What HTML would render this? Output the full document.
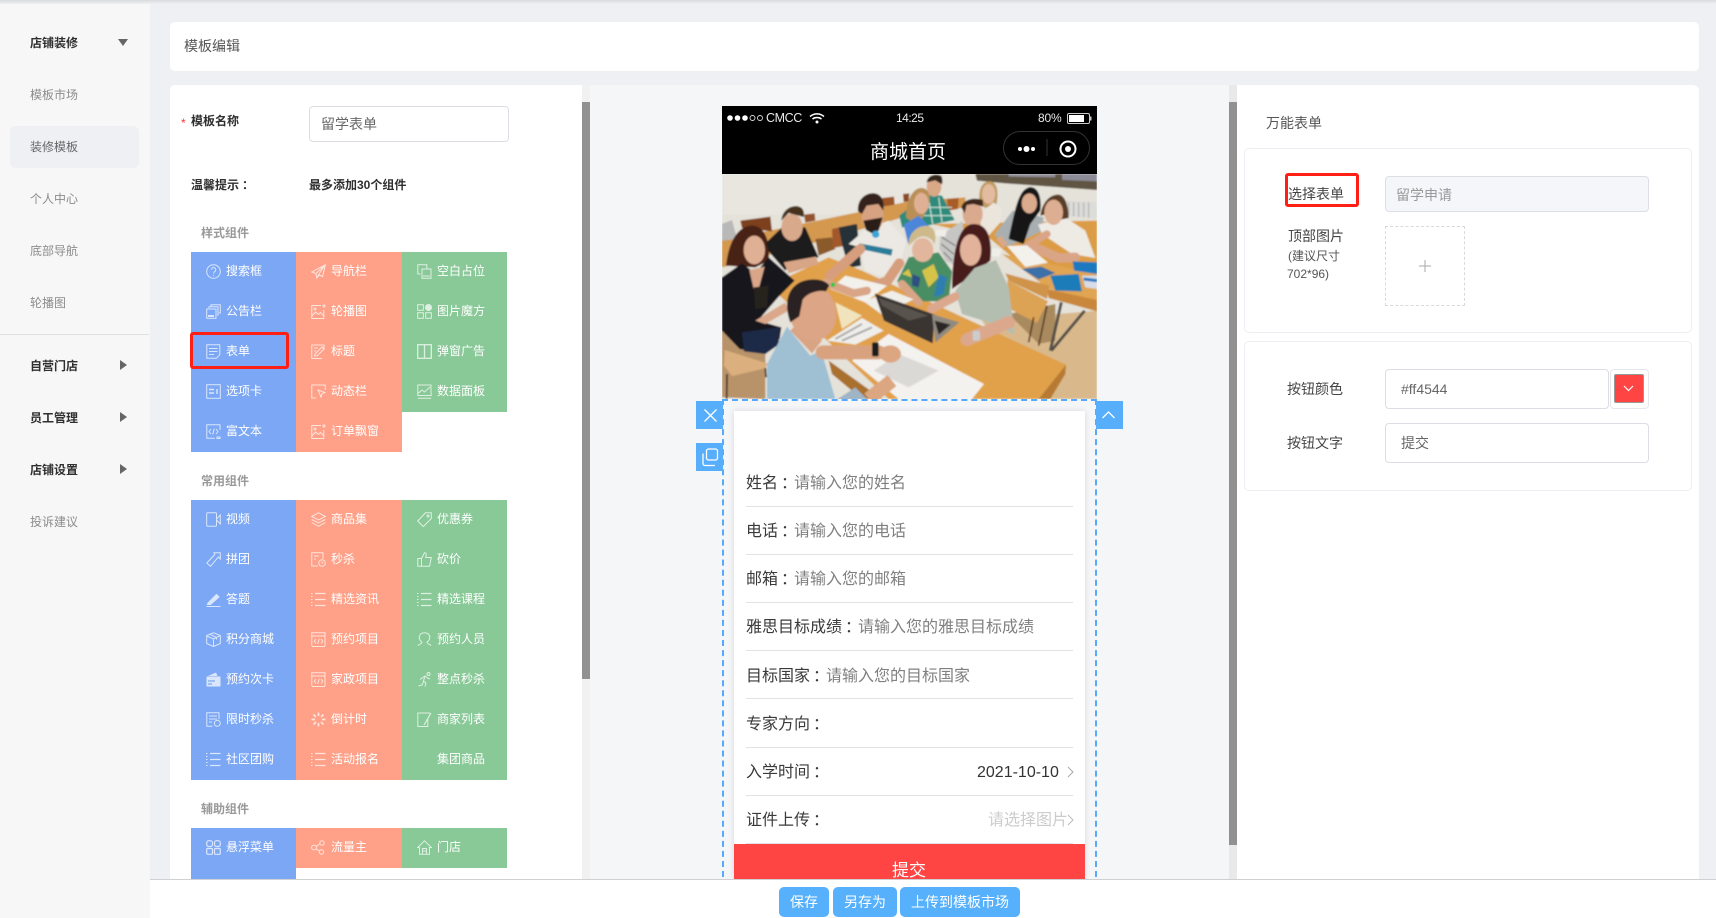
<!DOCTYPE html>
<html lang="zh-CN"><head><meta charset="utf-8"><title>模板编辑</title>
<style>
*{box-sizing:border-box}
html,body{margin:0;padding:0;width:1716px;height:918px;overflow:hidden;background:#eef0f4;font-family:"Liberation Sans","Noto Sans CJK SC",sans-serif;font-size:12px;color:#333}
.a{position:absolute}
.t{position:absolute;white-space:nowrap;line-height:20px;height:20px}
.k{font-family:"Noto Sans CJK TC",sans-serif;line-height:0;position:relative;left:3px}
#side{left:0;top:0;width:150px;height:918px;background:#f7f7f8}
#topsh{left:0;top:0;width:1716px;height:4px;background:linear-gradient(#d9dade,#eef0f4);z-index:5}
.s{left:30px;color:#8c8c8c}
.b{color:#2f2f2f;font-weight:700}
.col{position:absolute;width:105px}
.c{position:relative;height:40px;color:#fff;line-height:38px;padding-left:35px;white-space:nowrap}
.c svg{position:absolute;left:15px;top:12px;width:15px;height:15px;fill:none;stroke:#fff;stroke-width:1;opacity:.72}
.bl{background:#7ca7f4}.or{background:#ffa088}.gr{background:#89c997}
.sec{left:201px;color:#999;font-weight:700}
.ln{position:absolute;left:746px;width:327px;height:1px;background:#e2e2e2}
.f{position:absolute;left:746px;font-size:16px;line-height:22px;height:22px;color:#3a3a3a;white-space:nowrap}
.f i{font-style:normal;color:#808080}
.inp{position:absolute;background:#fff;border:1px solid #dcdee6;border-radius:4px;color:#666;font-size:14px;white-space:nowrap}
.btn{position:absolute;top:887px;height:30px;background:#57b0fb;color:#fff;border-radius:5px;text-align:center;font-size:14px;line-height:30px}
.card{position:absolute;left:1244px;width:448px;background:#fff;border:1px solid #eceef3;border-radius:5px}
.lb{left:1288px;font-size:14px;color:#444}
.red{position:absolute;border:3px solid #ff1f14;border-radius:3px}
</style></head><body>
<svg width="0" height="0" style="position:absolute"><defs>
<symbol id="q" viewBox="0 0 15 15"><circle cx="7.5" cy="7.5" r="6.8"/><path d="M5.4 5.8a2.2 2.2 0 1 1 3.4 1.8c-.8.5-1.2 1-1.2 1.9M7.5 10.8v1"/></symbol>
<symbol id="not" viewBox="0 0 15 15"><rect x=".7" y="5" width="9.3" height="9.3"/><path d="M3 4V2.8h9V11h-1M5 2.3V.8h9.3V9h-1.5"/><path d="M2 12h6" stroke-width="2"/></symbol>
<symbol id="frm" viewBox="0 0 15 15"><path d="M.8 14.3V.7h13v10l-3.500 3.600zM3 4.500h8.500M3 7.500h8.500M3 10.500h5"/></symbol>
<symbol id="tab" viewBox="0 0 15 15"><rect x=".7" y=".7" width="13.600" height="13.600"/><path d="M3 5.500h5M3 9h5M11 5v5" stroke-width="1.400"/></symbol>
<symbol id="rich" viewBox="0 0 15 15"><path d="M14 6V.8H.8v13.400h8"/><path d="M5 5 3 7.500 5 10M10 5l2 2.500-2 2.500M8.300 4.500 6.700 10.500M11 13h3v1.500h-3z"/></symbol>
<symbol id="nav" viewBox="0 0 15 15"><path d="M14.300.8.800 8l4 1.500 1 4.500 2.300-3 3.500 1.500zM14 1 5 9.500M14 1 6 13"/></symbol>
<symbol id="pic" viewBox="0 0 15 15"><path d="M10 1.500H.8v13h12V6"/><path d="M1 12l3.500-4 3 2.500 2-2 3.300 3.500"/><circle cx="4" cy="5" r="1"/><path d="M13 0v4M11 2h4"/></symbol>
<symbol id="ttl" viewBox="0 0 15 15"><path d="M13 6V1H.8v13.500H11"/><path d="M4 10l7-7 2 2-7 7H3.500zM3 4h4M3 7h2"/></symbol>
<symbol id="dyn" viewBox="0 0 15 15"><path d="M5 14H.8V1h13.400v5"/><path d="M7 6l7 2.500-3 1.200-1 3.300z"/></symbol>
<symbol id="blk" viewBox="0 0 15 15"><path d="M3.500 10H.8V.8h9V5"/><path d="M5 5h9v9.200H5zM6 12h7" /></symbol>
<symbol id="cub" viewBox="0 0 15 15"><rect x=".7" y=".7" width="5.600" height="5.600"/><rect x=".7" y="8.700" width="5.600" height="5.600"/><rect x="8.700" y="8.700" width="5.600" height="5.600"/><circle cx="11.500" cy="3.500" r="3" fill="#fff"/></symbol>
<symbol id="pop" viewBox="0 0 15 15"><rect x=".7" y=".7" width="13.600" height="13.600" stroke-width="1.300"/><path d="M7.500 1v13" stroke-width="1.300"/></symbol>
<symbol id="chart" viewBox="0 0 15 15"><path d="M14 7V1H.8v10.500h13.400zM1 9.500l4-3.500 2.500 2L13 3M.8 14.300h13.400"/></symbol>
<symbol id="vid" viewBox="0 0 15 15"><rect x=".7" y=".7" width="9.800" height="13.600" rx="1"/><path d="M10.500 7 14.300 3v9l-3.800-4"/></symbol>
<symbol id="stk" viewBox="0 0 15 15"><path d="M7.500.8 14.300 4.500 7.500 8 .7 4.500zM.7 7.500 7.500 11l6.800-3.500M.7 10.500l6.800 3.800 6.800-3.800"/></symbol>
<symbol id="tag" viewBox="0 0 15 15"><path d="M8.500.8h5.800v5.800l-8 8L.7 9z"/><circle cx="11" cy="4" r="1"/></symbol>
<symbol id="arr" viewBox="0 0 15 15"><path d="M8 .8h6.300V7l-2-2L4.500 14.300.8 11l8-8.500z"/></symbol>
<symbol id="sec" viewBox="0 0 15 15"><path d="M7 14H.8V.8H12v6"/><circle cx="11" cy="11" r="3.300"/><path d="M3 4h5M3 7h2M11 9.500V11h1.300"/></symbol>
<symbol id="thu" viewBox="0 0 15 15"><path d="M4.500 6.500 7.500.8c1.500 0 2 1 1.700 2.400L8.700 5.500h5.600l-1.800 8.800H4.500zM.8 6.500h3.700v7.800H.8z"/></symbol>
<symbol id="pen" viewBox="0 0 15 15"><path d="M2 11 10.500 2.500 13 5 4.500 12.500H1.500z" fill="#fff"/><path d="M.5 14.500h14"/></symbol>
<symbol id="lst" viewBox="0 0 15 15"><path d="M4 1.500h10.500M4 7.500h10.500M4 13.500h10.500" stroke-width="1.300"/><path d="M0 1.500h1.500M0 4.500h1.500M0 7.500h1.500M0 10.500h1.500M0 13.500h1.500"/></symbol>
<symbol id="box" viewBox="0 0 15 15"><path d="M7.500.8 14.300 3.500v8l-6.800 3-6.800-3v-8zM.7 4l6.800 3 6.800-3.500M7.500 7v7.300M4 2.300 10.500 5.500v2"/></symbol>
<symbol id="cal" viewBox="0 0 15 15"><path d="M14 14V.8H.8V14M.8 4h13.300M1 14.500h13"/><path d="M5 7 3.300 9.200 5 11.500M10 7l1.800 2.200L10 11.500M8.300 6.500 6.700 12"/></symbol>
<symbol id="per" viewBox="0 0 15 15"><path d="M5 10C2.800 8.800 2.300 6.500 2.300 5.200 2.300 2.500 4.500.7 7.500.7s5.200 1.800 5.200 4.500c0 1.300-.5 3.600-2.700 4.800 0 1.800 2.500 2.200 4.200 3.500M5 10c0 1.800-2.500 2.200-4.200 3.500"/></symbol>
<symbol id="crd" viewBox="0 0 15 15"><path d="M2 4 10 .5 11.500 4z" fill="#fff" stroke="none"/><rect x=".5" y="4.500" width="14" height="10" fill="#fff" stroke="none"/><path d="M2 9h7M2 12h4" stroke="#7ca7f4" stroke-width="1.300"/></symbol>
<symbol id="run" viewBox="0 0 15 15"><circle cx="11.500" cy="2" r="1.500"/><path d="M5 6l3-2 2.500 2 2.500 1M8 4 6.500 9 9 11l-1 3.500M6.500 9.500 5 13 1.500 14M5 6 3 7.500"/></symbol>
<symbol id="lim" viewBox="0 0 15 15"><path d="M6.500 14.300H.8V.8H13v6.500"/><circle cx="11.300" cy="11.300" r="3"/><path d="M3 4h8M3 7h8M3 10h3"/></symbol>
<symbol id="spn" viewBox="0 0 15 15"><path d="M7.500.5v3.500M7.500 11v3.500M.5 7.500H4M11 7.500h3.500M2.500 2.500 5 5M10 10l2.500 2.500M2.500 12.500 5 10M10 5l2.500-2.500" stroke-width="1.700"/></symbol>
<symbol id="edt" viewBox="0 0 15 15"><path d="M13 1H.8v13.500h10V7"/><path d="M14 1 7 13" stroke-width="1.200"/></symbol>
<symbol id="g4" viewBox="0 0 15 15"><rect x=".7" y=".7" width="5.800" height="5.800" rx="2" stroke-width="1.200"/><rect x="8.500" y=".7" width="5.800" height="5.800" rx="2" stroke-width="1.200"/><rect x=".7" y="8.500" width="5.800" height="5.800" rx="1" stroke-width="1.200"/><rect x="8.500" y="8.500" width="5.800" height="5.800" rx="1" stroke-width="1.200"/></symbol>
<symbol id="shr" viewBox="0 0 15 15"><circle cx="3" cy="7.500" r="2.400"/><circle cx="11" cy="3" r="2.200"/><circle cx="10.500" cy="12" r="2.200"/><path d="M5 6.300 9 4M5 9l3.700 2"/></symbol>
<symbol id="hom" viewBox="0 0 15 15"><path d="M.7 7.500 7.500.8l6.800 6.700H12.500v6.800H2.500V7.500z"/><path d="M5.500 14V8.500h4V14M5.500 11h4"/></symbol>
</defs></svg>

<div class="a" id="side"></div>
<div class="a" id="topsh"></div>
<div class="a" style="left:10px;top:126px;width:129px;height:42px;background:#eef0f4;border-radius:6px"></div>
<div class="a" style="left:0;top:334px;width:149px;height:1px;background:#dfe0e3"></div>
<div class="t s b" style="top:33px">店铺装修</div>
<div class="a" style="left:118px;top:39px;border-left:5px solid transparent;border-right:5px solid transparent;border-top:7px solid #666"></div>
<div class="t s" style="top:85px">模板市场</div>
<div class="t s" style="top:137px;color:#666">装修模板</div>
<div class="t s" style="top:189px">个人中心</div>
<div class="t s" style="top:241px">底部导航</div>
<div class="t s" style="top:293px">轮播图</div>
<div class="t s b" style="top:356px">自营门店</div>
<div class="t s b" style="top:408px">员工管理</div>
<div class="t s b" style="top:460px">店铺设置</div>
<div class="t s" style="top:512px">投诉建议</div>
<div class="a" style="left:120px;top:360px;border-top:5.500px solid transparent;border-bottom:5.500px solid transparent;border-left:7px solid #666"></div>
<div class="a" style="left:120px;top:412px;border-top:5.500px solid transparent;border-bottom:5.500px solid transparent;border-left:7px solid #666"></div>
<div class="a" style="left:120px;top:464px;border-top:5.500px solid transparent;border-bottom:5.500px solid transparent;border-left:7px solid #666"></div>

<div class="a" style="left:170px;top:22px;width:1529px;height:49px;background:#fff;border-radius:5px"></div>
<div class="t" style="left:184px;top:36px;font-size:14px;color:#555">模板编辑</div>

<!-- left panel -->
<div class="a" style="left:170px;top:85px;width:412px;height:795px;background:#fff;border-radius:5px 0 0 0"></div>
<div class="a" style="left:582px;top:85px;width:8px;height:795px;background:#f1f1f1"></div>
<div class="a" style="left:582px;top:102px;width:8px;height:577px;background:#919191"></div>
<div class="t" style="left:181px;top:113px;color:#f33;font-size:12px">*</div>
<div class="t b" style="left:191px;top:111px">模板名称</div>
<div class="inp" style="left:309px;top:106px;width:200px;height:36px;line-height:34px;padding-left:11px">留学表单</div>
<div class="t b" style="left:191px;top:175px">温馨提示<span class="k">：</span></div>
<div class="t b" style="left:309px;top:175px">最多添加30个组件</div>
<div class="t sec" style="top:223px">样式组件</div>

<div class="col bl" style="left:191px;top:252px">
<div class="c"><svg><use href="#q"/></svg>搜索框</div>
<div class="c"><svg><use href="#not"/></svg>公告栏</div>
<div class="c"><svg><use href="#frm"/></svg>表单</div>
<div class="c"><svg><use href="#tab"/></svg>选项卡</div>
<div class="c"><svg><use href="#rich"/></svg>富文本</div>
</div>
<div class="col or" style="left:296px;top:252px;width:106px">
<div class="c"><svg><use href="#nav"/></svg>导航栏</div>
<div class="c"><svg><use href="#pic"/></svg>轮播图</div>
<div class="c"><svg><use href="#ttl"/></svg>标题</div>
<div class="c"><svg><use href="#dyn"/></svg>动态栏</div>
<div class="c"><svg><use href="#pic"/></svg>订单飘窗</div>
</div>
<div class="col gr" style="left:402px;top:252px">
<div class="c"><svg><use href="#blk"/></svg>空白占位</div>
<div class="c"><svg><use href="#cub"/></svg>图片魔方</div>
<div class="c"><svg><use href="#pop"/></svg>弹窗广告</div>
<div class="c"><svg><use href="#chart"/></svg>数据面板</div>
</div>
<div class="red" style="left:190px;top:332px;width:99px;height:37px"></div>

<div class="t sec" style="top:471px">常用组件</div>
<div class="col bl" style="left:191px;top:500px">
<div class="c"><svg><use href="#vid"/></svg>视频</div>
<div class="c"><svg><use href="#arr"/></svg>拼团</div>
<div class="c"><svg><use href="#pen"/></svg>答题</div>
<div class="c"><svg><use href="#box"/></svg>积分商城</div>
<div class="c"><svg><use href="#crd"/></svg>预约次卡</div>
<div class="c"><svg><use href="#lim"/></svg>限时秒杀</div>
<div class="c"><svg><use href="#lst"/></svg>社区团购</div>
</div>
<div class="col or" style="left:296px;top:500px;width:106px">
<div class="c"><svg><use href="#stk"/></svg>商品集</div>
<div class="c"><svg><use href="#sec"/></svg>秒杀</div>
<div class="c"><svg><use href="#lst"/></svg>精选资讯</div>
<div class="c"><svg><use href="#cal"/></svg>预约项目</div>
<div class="c"><svg><use href="#cal"/></svg>家政项目</div>
<div class="c"><svg><use href="#spn"/></svg>倒计时</div>
<div class="c"><svg><use href="#lst"/></svg>活动报名</div>
</div>
<div class="col gr" style="left:402px;top:500px">
<div class="c"><svg><use href="#tag"/></svg>优惠券</div>
<div class="c"><svg><use href="#thu"/></svg>砍价</div>
<div class="c"><svg><use href="#lst"/></svg>精选课程</div>
<div class="c"><svg><use href="#per"/></svg>预约人员</div>
<div class="c"><svg><use href="#run"/></svg>整点秒杀</div>
<div class="c"><svg><use href="#edt"/></svg>商家列表</div>
<div class="c">集团商品</div>
</div>

<div class="t sec" style="top:799px">辅助组件</div>
<div class="col bl" style="left:191px;top:828px;height:51px">
<div class="c"><svg><use href="#g4"/></svg>悬浮菜单</div>
</div>
<div class="col or" style="left:296px;top:828px;width:106px">
<div class="c"><svg><use href="#shr"/></svg>流量主</div>
</div>
<div class="col gr" style="left:402px;top:828px">
<div class="c"><svg><use href="#hom"/></svg>门店</div>
</div>

<!-- center -->
<div class="a" style="left:590px;top:85px;width:639px;height:795px;background:#f5f6f8"></div>
<div class="a" style="left:1229px;top:85px;width:8px;height:795px;background:#e9e9e9"></div>
<div class="a" style="left:1229px;top:102px;width:8px;height:743px;background:#919191"></div>

<!-- phone head -->
<div class="a" style="left:722px;top:106px;width:375px;height:68px;background:#000"></div>
<svg class="a" style="left:722px;top:106px" width="375" height="68" viewBox="0 0 375 68">
<g fill="#fff"><circle cx="8" cy="12" r="2.800"/><circle cx="15.500" cy="12" r="2.800"/><circle cx="23" cy="12" r="2.800"/></g>
<g fill="none" stroke="#ddd" stroke-width=".9"><circle cx="30.500" cy="12" r="2.500"/><circle cx="38" cy="12" r="2.500"/></g>
<g fill="none" stroke="#fff" stroke-width="1.500"><path d="M88 10.500c4-3.500 10-3.500 14 0"/><path d="M90.500 13c2.500-2 6.500-2 9 0"/></g><circle cx="95" cy="16" r="1.500" fill="#fff"/>
<rect x="345.500" y="7.500" width="22" height="10" rx="1.500" fill="none" stroke="#ccc"/><rect x="347" y="9" width="15" height="7" fill="#fff"/><rect x="368" y="10.500" width="1.500" height="4" fill="#ccc"/>
<rect x="281.500" y="25.500" width="86" height="33" rx="16.500" fill="none" stroke="#333"/>
<path d="M325 33v17" stroke="#333"/>
<circle cx="298" cy="43" r="2" fill="#fff"/><circle cx="304.500" cy="43" r="3" fill="#fff"/><circle cx="311" cy="43" r="2" fill="#fff"/>
<circle cx="346" cy="43" r="7.500" fill="none" stroke="#fff" stroke-width="2"/><circle cx="346" cy="43" r="3" fill="#fff"/>
</svg>
<div class="t" style="left:766px;top:108px;color:#e8e8e8;font-size:12.500px;letter-spacing:-.4px">CMCC</div>
<div class="t" style="left:896px;top:108px;color:#e8e8e8;font-size:12px;letter-spacing:-.5px">14:25</div>
<div class="t" style="left:1038px;top:108px;color:#e8e8e8;font-size:12px;letter-spacing:-.2px">80%</div>
<div class="t" style="left:870px;top:142px;color:#fff;font-size:19px;line-height:22px;height:22px">商城首页</div>

<!-- photo -->
<svg class="a" style="left:722px;top:174px" width="375" height="225" viewBox="0 0 1125 675" preserveAspectRatio="none">
<defs><filter id="bl" x="0" y="0" width="100%" height="100%"><feGaussianBlur stdDeviation="2.600"/></filter></defs>
<g filter="url(#bl)">
<rect width="1125" height="675" fill="#e5e2da"/>
<rect x="0" y="0" width="620" height="120" fill="#e8e6df"/>
<polygon points="760,0 1125,0 1125,48 850,28 765,20" fill="#5f5443"/>
<polygon points="860,0 1000,0 1000,10 860,8" fill="#8f8d96"/><polygon points="1020,0 1125,0 1125,22 1020,18" fill="#8d8b96"/>
<polygon points="1025,80 1125,85 1125,135 1030,125" fill="#dcdcd8"/>
<path d="M1040 85v40M1055 85v42M1070 85v44M1085 85v44M1100 85v46" stroke="#aaa" stroke-width="3"/>
<polygon points="0,670 130,675 130,500 0,440" fill="#b8936a"/>
<polygon points="780,440 1125,410 1125,675 950,675" fill="#d9b98c"/>
<polygon points="860,420 1000,390 1000,500 950,510" fill="#a98a5f"/>
<polygon points="0,200 420,112 560,82 730,70 730,100 560,125 300,200 0,280" fill="#d49850"/>
<polygon points="280,195 330,190 340,225 290,245" fill="#8a5a2c"/>
<polygon points="55,140 145,128 150,172 60,162" fill="#7b3f1f"/>
<polygon points="246,122 278,118 280,140 250,146" fill="#94522a"/>
<polygon points="480,72 516,68 518,92 484,98" fill="#9c5428"/>
<polygon points="543,60 562,58 560,82 545,84" fill="#8a4b22"/>
<polygon points="675,75 710,72 708,105 678,110" fill="#a85d28"/>
<polygon points="330,165 400,150 390,212 332,222" fill="#a2592b"/>
<polygon points="350,160 405,150 417,275 380,282 360,210" fill="#253338"/>
<polygon points="0,150 30,138 45,195 0,200" fill="#b8b8b8"/>
<polygon points="630,150 1125,140 1125,190 1125,375 985,345 800,190" fill="#dc9c45"/>
<polygon points="840,240 1125,300 1125,385 980,345" fill="#e0a552"/>
<polygon points="975,345 1125,378 1125,412 980,372" fill="#c9873a"/>
<polygon points="850,298 982,335 975,375 860,320" fill="#cf9448"/>
<polygon points="856,318 978,382 945,447 858,402" fill="#dca355"/>
<path d="M935 430 920 505M975 395 950 515" stroke="#5a3a20" stroke-width="5"/>
<path d="M1018 385 985 530M988 530 1088 410" stroke="#54504a" stroke-width="9"/>
<polygon points="205,305 320,250 420,290 1032,572 950,675 500,675 170,362" fill="#e1a14c"/>
<polygon points="1032,572 950,675 985,675 1030,600" fill="#b77a30"/>
<polygon points="320,560 480,675 420,675 330,600" fill="#a96f2f"/>
<!-- chair front-left -->
<polygon points="8,528 135,568 132,582 30,606 6,575" fill="#dcb07e"/>
<path d="M15 600 14 675M130 582 132 610" stroke="#3d2a1c" stroke-width="5"/>
<!-- woman left -->
<path d="M12 275C20 200 50 155 90 155c35 0 55 40 50 105l-40 20z" fill="#4a2416"/>
<ellipse cx="97" cy="228" rx="32" ry="43" fill="#e0b094"/>
<path d="M0 310 60 268l40 30 40-48 78 70-50 50-60 70 70 20-5 35-60 40-60-10L0 470z" fill="#14151b"/>
<polygon points="82,288 128,278 110,345 95,345" fill="#d9a68a"/>
<path d="M95 340 140 335 135 400 100 405z" fill="#26201e"/>
<path d="M60 475 172 460 170 512 130 540 66 532z" fill="#1e2c46"/>
<path d="M100 440 190 385 200 410 130 450z" fill="#dba78a"/>
<!-- man 2 -->
<path d="M133 205 180 160 250 160 290 250 210 262 190 290 140 232z" fill="#1b1b1d"/>
<path d="M185 265 282 248 290 270 200 298z" fill="#d8a586"/>
<ellipse cx="210" cy="160" rx="32" ry="41" fill="#d9a98c"/>
<path d="M178 140C180 110 205 93 228 97c15 3 20 15 17 32l-45-12z" fill="#46301f"/>
<!-- man beard -->
<path d="M380 210 432 165 500 140 552 200 535 272 500 312 430 290 415 220z" fill="#ece9e4"/>
<path d="M412 208 512 226 508 245 415 225z" fill="#2b7d9a"/>
<path d="M415 225 325 305" stroke="#d69e7c" stroke-width="30" stroke-linecap="round"/>
<path d="M532 268 495 322 405 352" stroke="#d69e7c" stroke-width="30" fill="none" stroke-linecap="round"/>
<ellipse cx="452" cy="125" rx="33" ry="48" fill="#d6a282"/>
<path d="M408 112C405 75 432 55 458 58c22 3 30 25 26 52l-15-20-35 5-14 25z" fill="#34231a"/>
<path d="M424 140 482 130 470 170 450 178 432 168z" fill="#2b1c14"/>
<circle cx="461" cy="181" r="11" fill="#38a6d8"/>
<!-- plaid man -->
<path d="M532 125 612 62 660 65 698 138 610 156 540 160z" fill="#2e8a7a"/>
<path d="M620 75 632 150M650 70 660 145M600 100 690 100M590 125 695 125" stroke="#d7e8e0" stroke-width="3"/>
<ellipse cx="636" cy="38" rx="22" ry="30" fill="#d9a887"/>
<path d="M614 25C616 5 640-3 658 6c4 10 4 17 2 25l-20-12z" fill="#35261b"/>
<!-- woman blue -->
<path d="M552 130C552 80 572 42 598 42c25 0 30 30 20 60l-30 55z" fill="#b98f55"/>
<ellipse cx="598" cy="88" rx="22" ry="32" fill="#e0b094"/>
<path d="M545 152 590 125 620 155 558 208z" fill="#4c86d9"/>
<!-- blonde back -->
<path d="M772 75C770 40 785 20 805 22c22 3 25 35 18 70l-35 10z" fill="#c09a60"/>
<ellipse cx="800" cy="60" rx="20" ry="30" fill="#e3bb9f"/>
<path d="M778 115 815 85 840 105 835 145 800 185 775 160z" fill="#ebe5dc"/>
<!-- striped man -->
<path d="M655 185 722 140 725 200 695 272 672 262 652 225z" fill="#c6c6c4"/>
<path d="M660 190 700 215M658 210 695 240M665 235 690 260" stroke="#666" stroke-width="3"/>
<ellipse cx="752" cy="120" rx="30" ry="38" fill="#d9aa8e"/>
<path d="M718 100C722 80 750 68 782 78l2 20-30-8-20 3-6 25z" fill="#3c281c"/>
<!-- black hair woman -->
<path d="M818 182 872 110 965 130 958 172 890 205 850 218z" fill="#a9afb1"/>
<path d="M860 195C880 100 890 50 920 40c28-5 40 30 35 70l-30 40-20 60z" fill="#141214"/>
<ellipse cx="922" cy="88" rx="23" ry="30" fill="#dbab8e"/>
<path d="M830 190 850 215" stroke="#d8a888" stroke-width="18"/>
<!-- man right -->
<path d="M948 152 1030 130 1090 170 1120 252 1050 240 960 180z" fill="#eeeae4"/>
<path d="M955 125C960 85 985 60 1010 62c20 3 30 35 30 70l-25 5-25-20z" fill="#5a3d26"/>
<ellipse cx="995" cy="115" rx="28" ry="38" fill="#ddae92"/>
<path d="M1060 250 1010 252 950 225 890 228" stroke="#d9a586" stroke-width="28" fill="none" stroke-linecap="round"/>
<path d="M975 180 905 222" stroke="#d9a586" stroke-width="22" stroke-linecap="round"/>
<!-- papers right -->
<polygon points="855,216 915,214 978,266 910,279" fill="#f3f1ec"/>
<polygon points="640,168 675,168 670,188 640,185" fill="#f0eee8"/>
<polygon points="810,222 840,226 830,248 806,246" fill="#f0eee8"/>
<polygon points="900,285 958,278 1000,297 950,316" fill="#3a70a8"/>
<polygon points="985,305 1070,300 1080,352 1000,350" fill="#1b7cba"/>
<polygon points="1052,262 1125,265 1125,300 1056,290" fill="#1f79c0"/>
<polygon points="1080,305 1125,305 1125,345 1090,340" fill="#d8dce8"/>
<path d="M1085 315 1125 320" stroke="#1f79c0" stroke-width="9"/>
<!-- blonde woman front -->
<path d="M525 322 560 250 650 235 690 292 680 382 600 382 540 335z" fill="#4a8d64"/>
<path d="M600 290l35-20 15 40-30 30zM540 300l20-15 10 25z" fill="#d6c44a"/>
<path d="M650 300l25 10-10 50-30 10z" fill="#2f7fb0"/>
<path d="M570 300l25 10-5 30-20-5z" fill="#2f4f7f"/>
<path d="M540 330 590 385" stroke="#d8a586" stroke-width="24" stroke-linecap="round"/>
<ellipse cx="602" cy="228" rx="32" ry="36" fill="#e2b69c"/>
<path d="M560 215C558 175 590 152 618 156c22 4 25 30 20 55-10-20-30-30-50-20z" fill="#cdb98a"/>
<!-- red hair woman -->
<path d="M690 345C690 250 705 150 755 150c50 0 55 60 50 110l-70 55z" fill="#4a1a1c"/>
<ellipse cx="746" cy="228" rx="32" ry="47" fill="#e2b39a"/>
<path d="M700 350 758 282 822 258 860 340 878 482 800 445 720 420z" fill="#b4beb0"/>
<path d="M628 405 700 368" stroke="#dba88e" stroke-width="26" stroke-linecap="round"/>
<path d="M860 445 735 497" stroke="#dba88e" stroke-width="38" stroke-linecap="round"/>
<rect x="752" y="470" width="22" height="30" rx="6" fill="#ccc"/>
<!-- table papers -->
<polygon points="325,345 370,305 495,335 430,385" fill="#f3f1ec"/>
<polygon points="425,382 510,350 575,376 480,422" fill="#f0eee8"/>
<polygon points="340,385 420,425 360,465" fill="#f1e4bd"/>
<polygon points="315,500 420,432 485,470 400,512" fill="#efeeea"/>
<path d="M340 495 420 450M360 500 450 460" stroke="#aaa" stroke-width="6"/>
<path d="M310 325 395 358 435 350" stroke="#d9a586" stroke-width="24" fill="none" stroke-linecap="round"/>
<circle cx="333" cy="332" r="7" fill="#3ac24a"/>
<!-- laptop -->
<polygon points="458,358 638,422 632,508 486,440" fill="#3b3531"/>
<polygon points="470,372 620,425 560,440 480,395" fill="#58524e"/>
<polygon points="630,420 712,445 640,506" fill="#8f8a80"/>
<polygon points="638,440 686,452 650,482" fill="#2a2826"/>
<!-- big book -->
<polygon points="390,560 500,480 786,630 750,675 530,675" fill="#f4f2ef"/>
<polygon points="455,590 530,540 650,590 560,640" fill="#dbd9d6"/>
<!-- front man -->
<path d="M135 570 195 458 265 545 298 530 340 675H135z" fill="#9fc0d3"/>
<polygon points="205,470 245,430 300,500 270,538" fill="#d9a484"/>
<path d="M302 535 470 535" stroke="#d9a27e" stroke-width="42" stroke-linecap="round"/>
<rect x="450" y="505" width="20" height="42" rx="4" fill="#1a1a1a"/>
<ellipse cx="505" cy="540" rx="32" ry="26" fill="#dba680"/>
<path d="M440 675 510 620" stroke="#dba680" stroke-width="42"/>
<ellipse cx="272" cy="415" rx="70" ry="85" fill="#dca586" transform="rotate(-12 272 415)"/>
<path d="M205 445C185 390 195 340 240 322c30-10 65-8 82 12l-10 18c-25-5-55 5-70 25l-10 50z" fill="#2c2420"/>
<polygon points="340,680 400,640 435,675" fill="#9fb4c4"/>
</g></svg>

<!-- form card -->
<div class="a" style="left:734px;top:411px;width:351px;height:468px;background:#fff;box-shadow:0 0 6px rgba(0,0,0,.12)"></div>
<div class="f" style="top:473px">姓名<span class="k">：</span><i>请输入您的姓名</i></div><div class="ln" style="top:506px"></div>
<div class="f" style="top:521px">电话<span class="k">：</span><i>请输入您的电话</i></div><div class="ln" style="top:554px"></div>
<div class="f" style="top:569px">邮箱<span class="k">：</span><i>请输入您的邮箱</i></div><div class="ln" style="top:602px"></div>
<div class="f" style="top:617px">雅思目标成绩<span class="k">：</span><i>请输入您的雅思目标成绩</i></div><div class="ln" style="top:650px"></div>
<div class="f" style="top:666px">目标国家<span class="k">：</span><i>请输入您的目标国家</i></div><div class="ln" style="top:698px"></div>
<div class="f" style="top:714px">专家方向<span class="k">：</span></div><div class="ln" style="top:747px"></div>
<div class="f" style="top:762px">入学时间<span class="k">：</span></div><div class="f" style="left:977px;top:762px;color:#333">2021-10-10</div><div class="ln" style="top:795px"></div>
<svg class="a" style="left:1067px;top:766px" width="7" height="12" viewBox="0 0 7 12"><path d="M1 1l5 5-5 5" fill="none" stroke="#aaa"/></svg>
<div class="f" style="top:810px">证件上传<span class="k">：</span></div><div class="f" style="left:988px;top:810px;color:#ccc">请选择图片</div>
<svg class="a" style="left:1067px;top:814px" width="7" height="12" viewBox="0 0 7 12"><path d="M1 1l5 5-5 5" fill="none" stroke="#bbb"/></svg>
<div class="ln" style="top:843px"></div>
<div class="a" style="left:734px;top:844px;width:351px;height:36px;background:#ff4544"></div>
<div class="t" style="left:892px;top:860px;color:#fff;font-size:17px;line-height:22px;height:22px">提交</div>

<!-- dashed -->
<div class="a" style="left:722px;top:399px;width:375px;height:478px;border:2px dashed #57a9fb;border-bottom:0"></div>
<div class="a" style="left:696px;top:401px;width:27px;height:28px;background:#57aefb"></div>
<svg class="a" style="left:697px;top:401px" width="27" height="28"><path d="M7.500 8.500l12 12M19.500 8.500l-12 12" stroke="#fff" stroke-width="1.300"/></svg>
<div class="a" style="left:696px;top:443px;width:27px;height:28px;background:#57aefb"></div>
<svg class="a" style="left:696px;top:443px" width="27" height="28" fill="none" stroke="#fff" stroke-width="1.300"><rect x="10.500" y="6" width="11" height="11" rx="2"/><path d="M7 10.500v10c0 1 .8 2 2 2h10"/></svg>
<div class="a" style="left:1096px;top:401px;width:27px;height:28px;background:#57aefb"></div>
<svg class="a" style="left:1095px;top:401px" width="27" height="28"><path d="M7.500 17l6-6 6 6" fill="none" stroke="#fff" stroke-width="1.300"/></svg>

<!-- right panel -->
<div class="a" style="left:1237px;top:85px;width:462px;height:795px;background:#fff;border-radius:0 6px 0 0"></div>
<div class="t" style="left:1266px;top:113px;font-size:14px;color:#555">万能表单</div>
<div class="card" style="top:148px;height:185px"></div>
<div class="card" style="top:341px;height:150px"></div>
<div class="t lb" style="top:184px">选择表单</div>
<div class="red" style="left:1285px;top:173px;width:74px;height:34px"></div>
<div class="inp" style="left:1385px;top:176px;width:264px;height:36px;line-height:36px;padding-left:10px;background:#f5f6fa;color:#999">留学申请</div>
<div class="t lb" style="top:226px">顶部图片</div>
<div class="t" style="left:1288px;top:246px;color:#555">(建议尺寸</div>
<div class="t" style="left:1287px;top:264px;color:#555">702*96)</div>
<div class="a" style="left:1385px;top:226px;width:80px;height:80px;border:1px dashed #d9d9d9"></div>
<svg class="a" style="left:1419px;top:260px" width="12" height="12"><path d="M6 0v12M0 6h12" stroke="#a9a9a9"/></svg>
<div class="t lb" style="left:1287px;top:379px">按钮颜色</div>
<div class="inp" style="left:1385px;top:369px;width:224px;height:40px;line-height:38px;padding-left:15px">#ff4544</div>
<div class="a" style="left:1610px;top:369px;width:39px;height:40px;border:1px solid #e6e7ec;border-radius:4px"></div>
<div class="a" style="left:1614px;top:374px;width:30px;height:29px;background:#ff4544;border:1px solid #999;border-radius:2px"></div>
<svg class="a" style="left:1623px;top:385px" width="11" height="7"><path d="M1 1l4.500 4.500L10 1" fill="none" stroke="#fff" stroke-width="1.200"/></svg>
<div class="t lb" style="left:1287px;top:433px">按钮文字</div>
<div class="inp" style="left:1385px;top:423px;width:264px;height:40px;line-height:38px;padding-left:15px">提交</div>

<!-- footer -->
<div class="a" style="left:150px;top:879px;width:1566px;height:39px;background:#fff;border-top:1px solid #d0d0d2"></div>
<div class="btn" style="left:779px;width:50px">保存</div>
<div class="btn" style="left:833px;width:64px">另存为</div>
<div class="btn" style="left:900px;width:120px">上传到模板市场</div>
</body></html>
